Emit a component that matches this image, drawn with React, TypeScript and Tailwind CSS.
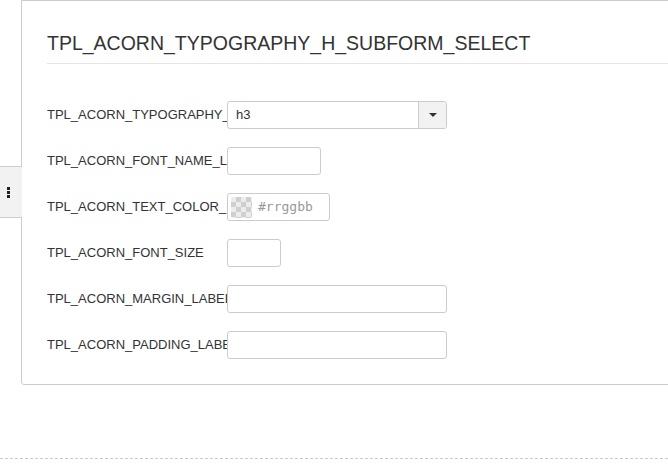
const rows = [
  { label: "TPL_ACORN_TYPOGRAPHY_HEADING_LABEL", kind: "select", width: "w-[220px]" },
  { label: "TPL_ACORN_FONT_NAME_LABEL", kind: "text", width: "w-[94px]" },
  { label: "TPL_ACORN_TEXT_COLOR_LABEL", kind: "color", width: "w-[103px]" },
  { label: "TPL_ACORN_FONT_SIZE", kind: "text", width: "w-[54px]" },
  { label: "TPL_ACORN_MARGIN_LABEL", kind: "text", width: "w-[220px]" },
  { label: "TPL_ACORN_PADDING_LABEL", kind: "text", width: "w-[220px]" },
];

function Field({ kind, width }: { kind: string; width: string }) {
  if (kind === "select") {
    return (
      <div className={`${width} h-[28px] flex border border-[#ccc] rounded-[3px] overflow-hidden bg-white`}>
        <div className="flex-1 pl-[8px] flex items-center text-[13px] text-[#333]">h3</div>
        <div className="w-[28px] border-l border-[#ccc] bg-[#f2f2f2] flex items-center justify-center">
          <div className="w-0 h-0 border-x-[4px] border-x-transparent border-t-[4px] border-t-[#333]" />
        </div>
      </div>
    );
  }
  if (kind === "color") {
    return (
      <div className={`${width} h-[28px] flex items-center gap-[6px] border border-[#ccc] rounded-[3px] bg-white pl-[3px]`}>
        <div className="w-[21px] h-[21px] rounded-[2px] bg-[conic-gradient(#cfcfcf_25%,#ececec_0_50%,#cfcfcf_0_75%,#ececec_0)] bg-[length:10px_10px]" />
        <span className="text-[13px] text-[#999] font-['DejaVu_Sans_Mono',monospace]">#rrggbb</span>
      </div>
    );
  }
  return <div className={`${width} h-[28px] border border-[#ccc] rounded-[3px] bg-white`} />;
}

export default function App() {
  return (
    <div className="relative w-[668px] h-[476px] overflow-hidden bg-white font-['Liberation_Sans',Arial,sans-serif] text-[#333]">
      {/* side toggle tab */}
      <div className="absolute left-0 top-[166px] w-[22px] h-[52px] bg-[#f2f2f2] border-y border-[#ccc] flex flex-col items-center justify-center gap-[1px] pr-[6px] z-10">
        <div className="w-[3px] h-[3px] bg-[#222]" />
        <div className="w-[3px] h-[3px] bg-[#222]" />
        <div className="w-[3px] h-[3px] bg-[#222]" />
      </div>

      <div className="ml-[21px] mr-[-10px] border border-[#ccc] rounded-bl-[3px] pt-[31px] pb-[25px] pl-[25px]">
        <h2 className="text-[19.5px] leading-[22px] pb-[9px] border-b border-[#e5e5e5]">
          TPL_ACORN_TYPOGRAPHY_H_SUBFORM_SELECT
        </h2>
        <div className="mt-[37px] flex flex-col gap-[18px]">
          {rows.map((r) => (
            <div key={r.label} className="flex items-center">
              <div className="w-[180px] overflow-hidden whitespace-nowrap text-[13px] leading-[16px]">{r.label}</div>
              <Field kind={r.kind} width={r.width} />
            </div>
          ))}
        </div>
      </div>

      <div className="mt-[73px] border-t border-dashed border-[#ccc]" />
    </div>
  );
}
